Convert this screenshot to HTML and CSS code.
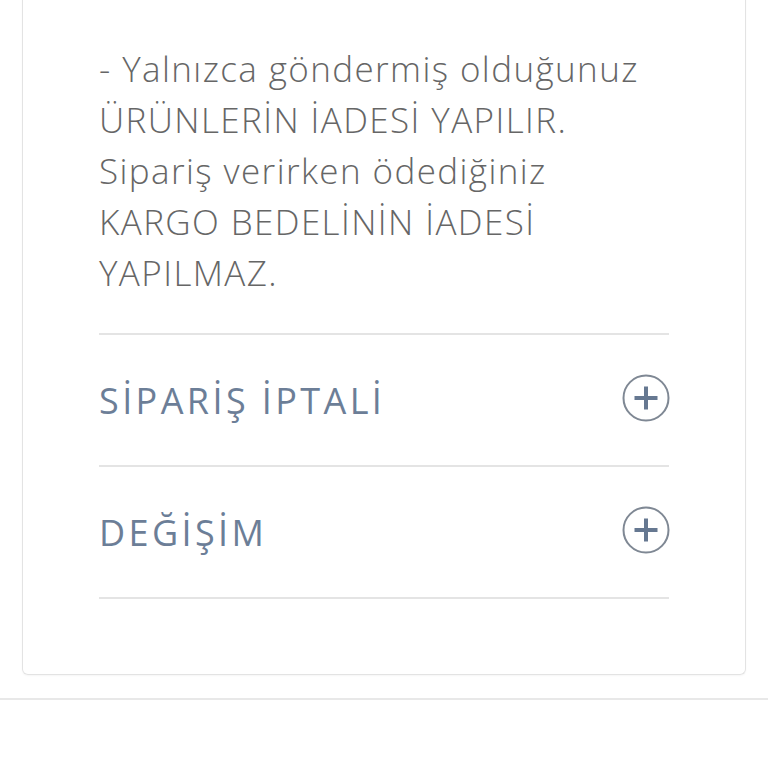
FILE: index.html
```html
<!DOCTYPE html>
<html lang="tr">
<head>
  <meta charset="UTF-8">
  <meta name="viewport" content="width=device-width, initial-scale=1.0">
  <title>İade ve Değişim</title>
  <link rel="stylesheet" href="styles.css">
</head>
<body>
  <div class="page">
    <div class="info-card">
      <p class="info-text">- Yalnızca göndermiş olduğunuz ÜRÜNLERİN İADESİ YAPILIR. Sipariş verirken ödediğiniz KARGO BEDELİNİN İADESİ YAPILMAZ.</p>

      <!-- Accordion sections -->
      <div class="accordion">
        <div class="accordion-item">
          <h3>SİPARİŞ İPTALİ</h3>
          <svg class="toggle" width="48" height="48" viewBox="0 0 48 48">
            <circle cx="24" cy="24" r="22.5" fill="none" stroke="#7f8894" stroke-width="2"/>
            <path d="M24 12.5v23M12.5 24h23" stroke="#667891" stroke-width="4"/>
          </svg>
        </div>
        <div class="accordion-item">
          <h3>DEĞİŞİM</h3>
          <svg class="toggle" width="48" height="48" viewBox="0 0 48 48">
            <circle cx="24" cy="24" r="22.5" fill="none" stroke="#7f8894" stroke-width="2"/>
            <path d="M24 12.5v23M12.5 24h23" stroke="#667891" stroke-width="4"/>
          </svg>
        </div>
      </div>
    </div>
  </div>
  <div class="page-end"></div>
</body>
</html>
```

FILE: styles.css
```css
body {
  margin: 0;
  background: #fff;
  font-family: "Open Sans", "DejaVu Sans", sans-serif;
}

.page {
  padding: 0 22px 23px;
}

.info-card {
  margin-top: -10px;
  border: 1px solid #e3e3e3;
  border-top: none;
  border-radius: 0 0 6px 6px;
  padding: 53px 76px 75px;
  box-shadow: 0 1px 2px rgba(0, 0, 0, 0.04);
}

.info-text {
  max-width: 555px;
  margin: 0 0 35px;
  font-size: 35px;
  font-weight: 300;
  line-height: 51px;
  letter-spacing: 1.4px;
  color: #666;
}

.accordion {
  border-top: 2px solid #e4e4e4;
}

.accordion-item {
  display: flex;
  justify-content: space-between;
  align-items: center;
  height: 130px;
  border-bottom: 2px solid #e4e4e4;
}

.accordion-item h3 {
  margin: 0;
  font-size: 36px;
  font-weight: 400;
  color: #6c7e97;
  letter-spacing: 3.4px;
}

.toggle {
  margin: 0 -1px 4px 0;
}

.page-end {
  border-top: 2px solid #e8e8e8;
}
```
